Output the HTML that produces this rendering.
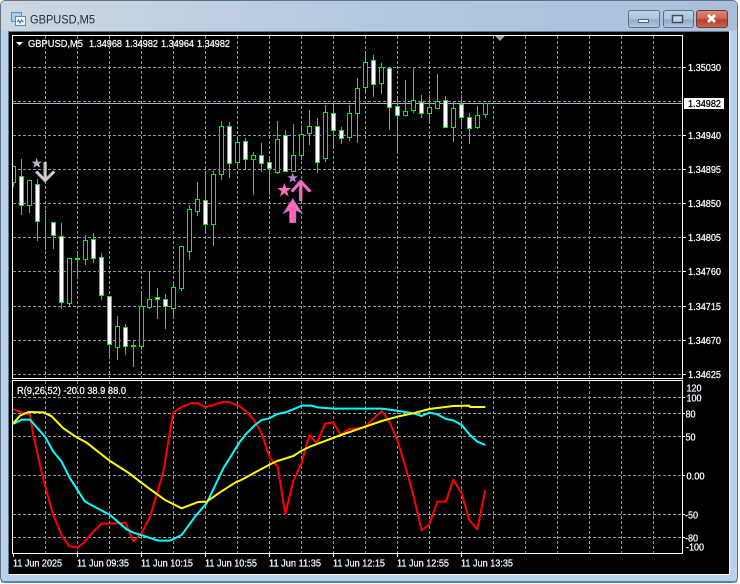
<!DOCTYPE html>
<html><head><meta charset="utf-8"><style>
html,body{margin:0;padding:0;background:#fff}
svg{display:block}
text{font-family:"Liberation Sans",sans-serif;font-size:10px;fill:#f2f7ff;stroke:#f2f7ff;stroke-width:.28px}
.w{fill:#fff;stroke:#00f500}
.h{fill:#000;stroke:#00f500}
</style></head><body>
<svg width="740" height="584" viewBox="0 0 740 584" xmlns="http://www.w3.org/2000/svg">
<defs>
<linearGradient id="t" x1="0" x2="1" y1="0" y2="0"><stop offset="0" stop-color="#cdd6e0"/><stop offset=".5" stop-color="#b4c9e0"/><stop offset="1" stop-color="#a8c0dc"/></linearGradient>
<linearGradient id="b" x1="0" x2="0" y1="0" y2="1"><stop offset="0" stop-color="#c3d5e8"/><stop offset=".5" stop-color="#a9c2dc"/><stop offset=".55" stop-color="#8fabc8"/><stop offset="1" stop-color="#afc8e0"/></linearGradient>
<linearGradient id="r" x1="0" x2="0" y1="0" y2="1"><stop offset="0" stop-color="#dc8c7c"/><stop offset=".5" stop-color="#c8604e"/><stop offset=".55" stop-color="#b53a28"/><stop offset="1" stop-color="#c86a50"/></linearGradient>
</defs>
<rect x="0.5" y="0.5" width="737" height="582" rx="5" fill="#b9d1ea" stroke="#5f7486"/>
<rect x="1" y="1" width="736" height="30" rx="4" fill="url(#t)"/>
<rect x="1" y="581" width="736" height="1.5" fill="#3f8ea8"/>
<rect x="8" y="31" width="722" height="544" fill="#f4f8fc"/>
<rect x="8" y="31" width="721" height="1" fill="#667788"/>
<rect x="8" y="31" width="1" height="543" fill="#667788"/>
<rect x="9" y="32" width="720" height="542" fill="#000"/>

<!-- title -->
<rect x="11.500" y="12.500" width="10" height="9" fill="#a8cdf0" stroke="#4f8fcf"/>
<rect x="15.500" y="16.500" width="10" height="9" fill="#f4f8ff" stroke="#4f8fcf"/>
<path d="M17 22l1.500-2 1.500 3 1.500-3 2 2" fill="none" stroke="#3a6fb0"/>
<text x="30" y="23.500" style="font-size:12px;fill:#1e2a36;stroke:none" textLength="65" lengthAdjust="spacingAndGlyphs">GBPUSD,M5</text>
<rect x="628.500" y="10.500" width="31" height="17" rx="2.500" fill="url(#b)" stroke="#5d7186"/>
<rect x="638.500" y="19.500" width="10" height="3" fill="#f0f4f8" stroke="#55677a"/>
<rect x="663.500" y="10.500" width="30" height="17" rx="2.500" fill="url(#b)" stroke="#5d7186"/>
<rect x="672.500" y="15.500" width="10" height="7" fill="#c6d6e6" stroke="#3f4f60" stroke-width="1.500"/>
<rect x="696.500" y="10.500" width="31" height="17" rx="2.500" fill="url(#r)" stroke="#6c3a38"/>
<path d="M708 15l7 7M715 15l-7 7" stroke="#fff" stroke-width="2.800" fill="none"/>

<!-- grid main -->
<path d="M13 67.500H682M13 101.500H682M13 135.500H682M13 169.500H682M13 203.500H682M13 237.500H682M13 271.500H682M13 306.500H682M13 340.500H682M13 374.500H682" stroke="#8a98a8" stroke-dasharray="3 2" fill="none"/>
<path d="M45.500 36V378M77.500 36V378M109.500 36V378M141.500 36V378M173.500 36V378M205.500 36V378M237.500 36V378M269.500 36V378M301.500 36V378M333.500 36V378M365.500 36V378M397.500 36V378M429.500 36V378M461.500 36V378M493.500 36V378M525.500 36V378M557.500 36V378M589.500 36V378M621.500 36V378M653.500 36V378" stroke="#8a98a8" stroke-dasharray="3 2" fill="none"/>
<rect x="13" y="103" width="669" height="1" fill="#a8b0b8"/>

<!-- wicks -->
<path stroke="#00f500" fill="none" d="M13.500 166V187M21.500 159V215M29.500 180V213M37.500 179V241M45.500 210V250M53.500 222V249M61.500 223V309M69.500 258V307M77.500 252V277M85.500 235V265M93.500 233V263M101.500 253V300M109.500 296V356M117.500 316V360M125.500 324V355M133.500 341V367M141.500 293V350M149.500 272V309M157.500 288V319M165.500 294V329M173.500 282V319M181.500 246V291M189.500 205V260M197.500 182V216M205.500 173V232M213.500 171V246M221.500 121V180M229.500 122V178M237.500 138V169M245.500 138V169M253.500 152V195M261.500 143V172M269.500 159V195M277.500 121V174M285.500 130V171M293.500 124V171M301.500 125V160M309.500 110V145M317.500 118V173M325.500 105V162M333.500 103V146M341.500 127V144M349.500 105V141M357.500 78V143M365.500 53V94M373.500 55V97M381.500 63V94M389.500 68V130M397.500 99V152M405.500 80V115M413.500 67V113M421.500 95V118M429.500 95V121M437.500 74V108M445.500 96V127M453.500 101V142M461.500 95V128M469.500 113V144M477.500 106V129M485.500 103V118"/>
<!-- bodies -->
<rect class="h" x="11.500" y="166.500" width="4" height="16"/>
<rect class="w" x="19.500" y="176.500" width="4" height="29"/>
<rect class="h" x="27.500" y="180.500" width="4" height="25"/>
<rect class="w" x="35.500" y="184.500" width="4" height="37"/>
<rect class="h" x="43.500" y="222.500" width="4" height="0"/>
<rect class="w" x="51.500" y="222.500" width="4" height="13"/>
<rect class="w" x="59.500" y="236.500" width="4" height="66"/>
<rect class="h" x="67.500" y="258.500" width="4" height="45"/>
<rect class="w" x="75.500" y="258.500" width="4" height="1"/>
<rect class="h" x="83.500" y="240.500" width="4" height="19"/>
<rect class="w" x="91.500" y="239.500" width="4" height="19"/>
<rect class="w" x="99.500" y="257.500" width="4" height="38"/>
<rect class="w" x="107.500" y="296.500" width="4" height="48"/>
<rect class="h" x="115.500" y="326.500" width="4" height="21"/>
<rect class="w" x="123.500" y="327.500" width="4" height="19"/>
<rect class="w" x="131.500" y="345.500" width="4" height="1"/>
<rect class="h" x="139.500" y="306.500" width="4" height="40"/>
<rect class="h" x="147.500" y="299.500" width="4" height="8"/>
<rect class="w" x="155.500" y="297.500" width="4" height="2"/>
<rect class="w" x="163.500" y="299.500" width="4" height="7"/>
<rect class="h" x="171.500" y="287.500" width="4" height="21"/>
<rect class="h" x="179.500" y="246.500" width="4" height="42"/>
<rect class="h" x="187.500" y="209.500" width="4" height="42"/>
<rect class="h" x="195.500" y="199.500" width="4" height="12"/>
<rect class="w" x="203.500" y="200.500" width="4" height="24"/>
<rect class="h" x="211.500" y="174.500" width="4" height="50"/>
<rect class="h" x="219.500" y="126.500" width="4" height="48"/>
<rect class="w" x="227.500" y="126.500" width="4" height="37"/>
<rect class="h" x="235.500" y="142.500" width="4" height="20"/>
<rect class="w" x="243.500" y="141.500" width="4" height="18"/>
<rect class="h" x="251.500" y="155.500" width="4" height="4"/>
<rect class="w" x="259.500" y="155.500" width="4" height="8"/>
<rect class="w" x="267.500" y="162.500" width="4" height="6"/>
<rect class="h" x="275.500" y="139.500" width="4" height="33"/>
<rect class="w" x="283.500" y="135.500" width="4" height="36"/>
<rect class="h" x="291.500" y="155.500" width="4" height="16"/>
<rect class="h" x="299.500" y="134.500" width="4" height="21"/>
<rect class="h" x="307.500" y="126.500" width="4" height="7"/>
<rect class="w" x="315.500" y="126.500" width="4" height="36"/>
<rect class="h" x="323.500" y="112.500" width="4" height="46"/>
<rect class="w" x="331.500" y="113.500" width="4" height="17"/>
<rect class="w" x="339.500" y="130.500" width="4" height="8"/>
<rect class="h" x="347.500" y="113.500" width="4" height="24"/>
<rect class="h" x="355.500" y="88.500" width="4" height="25"/>
<rect class="h" x="363.500" y="62.500" width="4" height="25"/>
<rect class="w" x="371.500" y="60.500" width="4" height="24"/>
<rect class="h" x="379.500" y="67.500" width="4" height="16"/>
<rect class="w" x="387.500" y="68.500" width="4" height="39"/>
<rect class="w" x="395.500" y="106.500" width="4" height="9"/>
<rect class="h" x="403.500" y="111.500" width="4" height="4"/>
<rect class="h" x="411.500" y="100.500" width="4" height="10"/>
<rect class="w" x="419.500" y="102.500" width="4" height="11"/>
<rect class="h" x="427.500" y="107.500" width="4" height="6"/>
<rect class="h" x="435.500" y="101.500" width="4" height="7"/>
<rect class="w" x="443.500" y="100.500" width="4" height="27"/>
<rect class="h" x="451.500" y="108.500" width="4" height="19"/>
<rect class="w" x="459.500" y="104.500" width="4" height="13"/>
<rect class="w" x="467.500" y="117.500" width="4" height="11"/>
<rect class="h" x="475.500" y="115.500" width="4" height="12"/>
<rect class="h" x="483.500" y="103.500" width="4" height="11"/>

<!-- left black cover and frames -->
<rect x="9" y="32" width="3" height="350" fill="#000"/>
<rect x="12" y="35" width="671" height="1" fill="#fff"/>
<rect x="12" y="35" width="1" height="344" fill="#fff"/>
<rect x="682" y="35" width="1" height="344" fill="#fff"/>
<rect x="12" y="378" width="671" height="1" fill="#fff"/>
<rect x="12" y="380" width="671" height="1" fill="#fff"/>
<rect x="12" y="380" width="1" height="174" fill="#fff"/>
<rect x="682" y="380" width="1" height="174" fill="#fff"/>
<rect x="12" y="553" width="671" height="1" fill="#fff"/>

<!-- arrows & stars: gray -->
<path d="M45.500 162V179M36.500 171.500l9 9 9-9" fill="none" stroke="#7d8aa8" stroke-width="3" transform="translate(-.7 0)"/>
<path d="M45.500 162V179M36.500 171.500l9 9 9-9" fill="none" stroke="#d8d0c4" stroke-width="2.400"/>
<path d="M36.700 158l1.300 3.800 3.900-.3-3 2.500 1.400 3.800-3.600-2.200-3.300 2.200 1.200-3.800-3.100-2.500 3.900.3z" fill="#b6b6c6"/>
<!-- pink -->
<path d="M284.300 183l1.800 5h5.200l-4.200 3.200 1.600 5.300-4.400-3.200-4.400 3.200 1.600-5.300-4.200-3.200h5.200z" fill="#ff69b4"/>
<path d="M292.700 172.500l1.300 3.800 4-.1-3.200 2.400 1.200 3.900-3.300-2.300-3.300 2.300 1.200-3.900-3.200-2.400 4 .1z" fill="#c47fe0"/>
<path d="M301 201V182M292 191.500l9-10 9.500 10" fill="none" stroke="#b070e0" stroke-width="2.800" transform="translate(-.7 0)"/>
<path d="M301.300 201V182M292.500 191.500l8.800-10 9.500 10" fill="none" stroke="#ff69b4" stroke-width="2.200"/>
<path d="M292.700 198.500L302.500 213.500 296 210.500V222.700H289.500V210.500L283 213.500z" fill="#ff69b4" stroke="#9a5ad0" stroke-width=".6"/>

<!-- top marker -->
<path d="M495 36h10l-5 5z" fill="#9a9a9a"/>
<path d="M16 42h7l-3.500 3.500z" fill="#fff"/>

<!-- header text -->
<text x="28" y="47" textLength="55" lengthAdjust="spacingAndGlyphs">GBPUSD,M5</text>
<text x="89" y="47" textLength="33" lengthAdjust="spacingAndGlyphs">1.34968</text>
<text x="125" y="47" textLength="33" lengthAdjust="spacingAndGlyphs">1.34982</text>
<text x="161" y="47" textLength="33" lengthAdjust="spacingAndGlyphs">1.34964</text>
<text x="197" y="47" textLength="33" lengthAdjust="spacingAndGlyphs">1.34982</text>

<!-- price axis -->
<path d="M683 67.500h3M683 135.500h3M683 169.500h3M683 203.500h3M683 237.500h3M683 271.500h3M683 306.500h3M683 340.500h3M683 374.500h3" stroke="#fff"/>
<text x="688" y="71" textLength="33" lengthAdjust="spacingAndGlyphs">1.35030</text>
<rect x="684" y="98" width="40" height="11" fill="#fff"/>
<text x="688" y="107" textLength="33" lengthAdjust="spacingAndGlyphs" style="fill:#000;stroke:#000">1.34982</text>
<text x="688" y="139" textLength="33" lengthAdjust="spacingAndGlyphs">1.34940</text>
<text x="688" y="173" textLength="33" lengthAdjust="spacingAndGlyphs">1.34895</text>
<text x="688" y="207" textLength="33" lengthAdjust="spacingAndGlyphs">1.34850</text>
<text x="688" y="241" textLength="33" lengthAdjust="spacingAndGlyphs">1.34805</text>
<text x="688" y="275" textLength="33" lengthAdjust="spacingAndGlyphs">1.34760</text>
<text x="688" y="310" textLength="33" lengthAdjust="spacingAndGlyphs">1.34715</text>
<text x="688" y="344" textLength="33" lengthAdjust="spacingAndGlyphs">1.34670</text>
<text x="688" y="378" textLength="33" lengthAdjust="spacingAndGlyphs">1.34625</text>

<!-- sub grid -->
<path d="M13 397.500H682M13 413.500H682M13 436.500H682M13 514.500H682M13 537.500H682" stroke="#9a9fa6" stroke-dasharray="3 2" fill="none"/>
<path d="M13 475.500H682" stroke="#7c8ea2" stroke-dasharray="3 2" fill="none"/>
<path d="M45.500 381V553M77.500 381V553M109.500 381V553M141.500 381V553M173.500 381V553M205.500 381V553M237.500 381V553M269.500 381V553M301.500 381V553M333.500 381V553M365.500 381V553M397.500 381V553M429.500 381V553M461.500 381V553M493.500 381V553M525.500 381V553M557.500 381V553M589.500 381V553M621.500 381V553M653.500 381V553" stroke="#8a96a4" stroke-dasharray="3 2" fill="none"/>

<!-- indicators -->
<g fill="none" stroke-linejoin="round">
<g transform="translate(0 375) scale(.3333)">
<polyline stroke="#ff0000" stroke-width="6" points="40,103 65,112 90,120 100,180 120,270 140,350 160,420 185,480 208,514 232,517 250,505 270,480 305,446 352,445 376,443 400,498 425,475 450,425 470,360 490,290 505,200 520,112 545,96 575,84 595,85 615,97 640,90 670,80 690,82 715,92 720,95"/>
<polyline stroke="#00ffff" stroke-width="6" points="40,147 65,134 90,134 135,185 160,230 185,260 210,310 255,380 330,420 380,463 400,473 430,482 475,497 510,497 545,480 585,425 620,385 670,280 720,200"/>
<polyline stroke="#ffff00" stroke-width="6" points="40,145 60,122 85,111 130,112 155,124 190,160 232,188 260,203 330,258 385,293 440,335 495,375 545,400 595,381 620,380 660,352 710,320 720,317"/>
</g>
<g transform="translate(240 375) scale(.3333)">
<polyline stroke="#ff0000" stroke-width="6" points="0,95 20,110 42,135 65,175 90,250 113,275 136,417 160,318 183,270 208,180 230,205 256,145 280,143 303,180 328,162 352,160 376,155 425,107 448,140 472,195 495,270 520,360 545,466 568,448 592,380 618,380 640,314 665,355 688,435 712,463 736,345"/>
<polyline stroke="#00ffff" stroke-width="6" points="0,200 20,175 45,150 65,135 88,130 112,117 136,112 160,103 185,92 215,92 232,97 280,101 425,101 470,107 520,115 545,123 568,113 590,117 618,132 640,136 665,150 690,180 712,200 736,210"/>
<polyline stroke="#ffff00" stroke-width="6" points="0,317 40,295 90,268 112,258 160,243 183,228 208,216 303,180 376,155 425,138 472,125 520,115 568,102 640,93 688,92 690,96 736,96"/>
</g>
</g>

<!-- sub text -->
<text x="17" y="394" textLength="109" lengthAdjust="spacingAndGlyphs">R(9,26,52) -20.0 38.9 88.0</text>

<!-- sub axis -->
<path d="M683 397.500h2M683 413.500h2M683 436.500h2M683 475.500h2M683 514.500h2M683 537.500h2" stroke="#fff"/>
<text x="686.500" y="391.500" textLength="15" lengthAdjust="spacingAndGlyphs">120</text>
<text x="686.500" y="401.500" textLength="15" lengthAdjust="spacingAndGlyphs">100</text>
<text x="685.500" y="417.500" textLength="10" lengthAdjust="spacingAndGlyphs">80</text>
<text x="685.500" y="440.500" textLength="10" lengthAdjust="spacingAndGlyphs">50</text>
<text x="686.500" y="479.500" textLength="18" lengthAdjust="spacingAndGlyphs">0.00</text>
<text x="685" y="518.500" textLength="13" lengthAdjust="spacingAndGlyphs">-50</text>
<text x="685" y="541.500" textLength="13" lengthAdjust="spacingAndGlyphs">-80</text>
<text x="686" y="550.500" textLength="18" lengthAdjust="spacingAndGlyphs">-100</text>

<!-- time axis -->
<path d="M13.500 554v3M77.500 554v3M141.500 554v3M205.500 554v3M269.500 554v3M333.500 554v3M397.500 554v3M461.500 554v3" stroke="#fff"/>
<text x="13" y="566.500" textLength="49" lengthAdjust="spacingAndGlyphs">11 Jun 2025</text>
<text x="77" y="566.500" textLength="52" lengthAdjust="spacingAndGlyphs">11 Jun 09:35</text>
<text x="141" y="566.500" textLength="52" lengthAdjust="spacingAndGlyphs">11 Jun 10:15</text>
<text x="205" y="566.500" textLength="52" lengthAdjust="spacingAndGlyphs">11 Jun 10:55</text>
<text x="269" y="566.500" textLength="52" lengthAdjust="spacingAndGlyphs">11 Jun 11:35</text>
<text x="333" y="566.500" textLength="52" lengthAdjust="spacingAndGlyphs">11 Jun 12:15</text>
<text x="397" y="566.500" textLength="52" lengthAdjust="spacingAndGlyphs">11 Jun 12:55</text>
<text x="461" y="566.500" textLength="52" lengthAdjust="spacingAndGlyphs">11 Jun 13:35</text>
</svg>
</body></html>
